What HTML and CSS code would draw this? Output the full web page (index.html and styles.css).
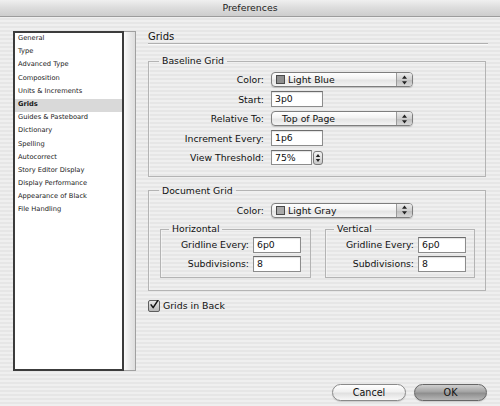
FILE: index.html
```html
<!DOCTYPE html>
<html>
<head>
<meta charset="utf-8">
<link rel="stylesheet" href="styles.css">
</head>
<body>
<div class="window">
  <div class="titlebar">Preferences</div>
  <div class="content">
    <div class="sidebar">
      <ul class="list">
        <li>General</li>
        <li>Type</li>
        <li>Advanced Type</li>
        <li>Composition</li>
        <li>Units &amp; Increments</li>
        <li class="selected">Grids</li>
        <li>Guides &amp; Pasteboard</li>
        <li>Dictionary</li>
        <li>Spelling</li>
        <li>Autocorrect</li>
        <li>Story Editor Display</li>
        <li>Display Performance</li>
        <li>Appearance of Black</li>
        <li>File Handling</li>
      </ul>
      <div class="gutter"></div>
    </div>
    <div class="main">
      <div class="section-title">Grids</div>
      <fieldset class="group baseline">
        <legend>Baseline Grid</legend>
        <div class="form">
          <span class="lbl">Color:</span>
          <div class="popup"><span class="swatch blue"></span><span class="ptext">Light Blue</span><span class="arrows"><svg width="7" height="10" viewBox="0 0 7 10"><path d="M3.5 0.5 L6 3.8 L1 3.8 Z M3.5 9.5 L6 6.2 L1 6.2 Z" fill="#222"/></svg></span></div>
          <span class="lbl">Start:</span>
          <div class="field">3p0</div>
          <span class="lbl">Relative To:</span>
          <div class="popup"><span class="ptext plain">Top of Page</span><span class="arrows"><svg width="7" height="10" viewBox="0 0 7 10"><path d="M3.5 0.5 L6 3.8 L1 3.8 Z M3.5 9.5 L6 6.2 L1 6.2 Z" fill="#222"/></svg></span></div>
          <span class="lbl">Increment Every:</span>
          <div class="field">1p6</div>
          <span class="lbl">View Threshold:</span>
          <div class="combo"><div class="field short">75%</div><div class="stepper"><svg width="6" height="10" viewBox="0 0 6 10"><path d="M3 1 L5.2 4 L0.8 4 Z M3 9 L5.2 6 L0.8 6 Z" fill="#222"/></svg></div></div>
        </div>
      </fieldset>
      <fieldset class="group document">
        <legend>Document Grid</legend>
        <div class="form">
          <span class="lbl">Color:</span>
          <div class="popup"><span class="swatch gray"></span><span class="ptext">Light Gray</span><span class="arrows"><svg width="7" height="10" viewBox="0 0 7 10"><path d="M3.5 0.5 L6 3.8 L1 3.8 Z M3.5 9.5 L6 6.2 L1 6.2 Z" fill="#222"/></svg></span></div>
        </div>
        <div class="subs">
          <fieldset class="group sub horiz">
            <legend>Horizontal</legend>
            <div class="subform">
              <span class="lbl">Gridline Every:</span>
              <div class="field">6p0</div>
              <span class="lbl">Subdivisions:</span>
              <div class="field">8</div>
            </div>
          </fieldset>
          <fieldset class="group sub vert">
            <legend>Vertical</legend>
            <div class="subform">
              <span class="lbl">Gridline Every:</span>
              <div class="field">6p0</div>
              <span class="lbl">Subdivisions:</span>
              <div class="field">8</div>
            </div>
          </fieldset>
        </div>
      </fieldset>
      <div class="check-row">
        <span class="checkbox"><svg width="12" height="12" viewBox="0 0 12 12"><path d="M2.5 5.8 L5 9.2 L10.5 0.8" fill="none" stroke="#111" stroke-width="1.8" stroke-linecap="round" stroke-linejoin="round"/></svg></span>
        <span class="check-label">Grids in Back</span>
      </div>
    </div>
  </div>
  <div class="footer">
    <button class="btn">Cancel</button>
    <button class="btn default">OK</button>
  </div>
</div>
</body>
</html>
```
FILE: styles.css
```css
html, body {
  margin: 0;
  padding: 0;
}
body {
  width: 500px;
  height: 406px;
  overflow: hidden;
  font-family: "DejaVu Sans", sans-serif;
  color: #111;
  background: repeating-linear-gradient(to bottom, #efefef 0, #efefef 2px, #e6e6e6 2px, #e6e6e6 4px);
}
.window {
  display: flex;
  flex-direction: column;
  width: 500px;
  height: 406px;
}
.titlebar {
  height: 17px;
  box-sizing: border-box;
  border-bottom: 1px solid #9c9c9c;
  background: linear-gradient(to bottom, #f0f0f0, #dcdcdc 50%, #cdcdcd);
  text-align: center;
  font-size: 9.4px;
  line-height: 16px;
  color: #222;
}
.content {
  display: flex;
  padding: 14px 0 0 13px;
  height: 354px;
  box-sizing: border-box;
}
.sidebar {
  display: flex;
  width: 123px;
  height: 340px;
}
.list {
  list-style: none;
  margin: 0;
  padding: 0;
  flex: 1;
  background: #fff;
  border: 2px solid #3c3c3c;
  border-right-width: 2px;
}
.list li {
  height: 13.2px;
  line-height: 11px;
  padding: 0 0 0 3px;
  font-size: 6.7px;
  color: #1a1a1a;
  white-space: nowrap;
}
.list li.selected {
  background: #d9d9d9;
  font-weight: bold;
}
.gutter {
  width: 11px;
  border: 1px solid #a0a0a0;
  border-left: none;
  background: linear-gradient(to right, #fafafa, #e8e8e8 60%, #dedede);
}
.main {
  width: 340px;
  margin-left: 12px;
  padding-top: 0;
}
.section-title {
  height: 12px;
  line-height: 12px;
  font-size: 10px;
  border-bottom: 1px solid #b0b0b0;
  box-shadow: 0 1px 0 #fafafa;
}
.group {
  margin: 0;
  padding: 0;
  min-width: 0;
  border: 1px solid #b4b4b4;
  box-shadow: inset 1px 1px 0 rgba(255,255,255,0.4);
}
.group legend {
  padding: 0 3px;
  margin-left: 10px;
  font-size: 9.3px;
  line-height: 12px;
}
.baseline {
  width: 338px;
  box-sizing: border-box;
  margin-top: 11px;
  padding: 3px 0 8px 0;
}
.document {
  width: 338px;
  box-sizing: border-box;
  margin-top: 8px;
  padding: 4px 0 11.5px 0;
}
.form {
  display: grid;
  grid-template-columns: 115px auto;
  column-gap: 7px;
  grid-auto-rows: 19.5px;
  align-items: center;
  justify-items: start;
}
.lbl {
  justify-self: end;
  font-size: 9.3px;
  white-space: nowrap;
}
.field {
  box-sizing: border-box;
  width: 52px;
  height: 16px;
  background: #fff;
  border: 1px solid #8c8c8c;
  border-top-color: #6c6c6c;
  box-shadow: inset 0 1px 1px rgba(0,0,0,0.12);
  font-size: 9.3px;
  line-height: 14px;
  padding-left: 3px;
}
.combo {
  display: flex;
  align-items: center;
  gap: 1px;
}
.field.short {
  width: 41px;
  height: 15px;
  line-height: 13px;
}
.stepper {
  box-sizing: border-box;
  width: 10px;
  height: 14px;
  border: 1px solid #7a7a7a;
  border-radius: 3px;
  background: linear-gradient(to bottom, #f4f4f4, #c8c8c8);
  display: flex;
  align-items: center;
  justify-content: center;
}
.popup {
  box-sizing: border-box;
  width: 142px;
  height: 15px;
  display: flex;
  align-items: center;
  border: 1px solid #7e7e7e;
  border-radius: 4px;
  background: linear-gradient(to bottom, #ffffff, #f2f2f2 45%, #e4e4e4 55%, #f4f4f4);
  box-shadow: 0 1px 1px rgba(0,0,0,0.18);
  overflow: hidden;
}
.swatch {
  box-sizing: border-box;
  width: 9px;
  height: 9px;
  margin-left: 4px;
  border: 1px solid #4a4a4a;
}
.swatch.blue { background: #8e8e8e; }
.swatch.gray { background: #a9a9a9; }
.ptext {
  flex: 1;
  font-size: 9.3px;
  padding-left: 3px;
  white-space: nowrap;
}
.ptext.plain {
  padding-left: 10px;
}
.arrows {
  width: 15px;
  height: 100%;
  border-left: 1px solid #9a9a9a;
  background: linear-gradient(to bottom, #ececec, #cfcfcf 50%, #bcbcbc 50%, #d8d8d8);
  display: flex;
  align-items: center;
  justify-content: center;
}
.subs {
  display: flex;
  gap: 14px;
  padding-left: 11px;
  margin-top: 3px;
}
.sub {
  box-sizing: border-box;
  padding: 0 0 4px 0;
}
.sub legend {
  margin-left: 8px;
}
.horiz { width: 151px; }
.vert { width: 150px; }
.subform {
  display: grid;
  grid-template-columns: 88px 48px;
  column-gap: 4px;
  grid-auto-rows: 19px;
  align-items: center;
}
.subform .field {
  width: 48px;
}
.check-row {
  display: flex;
  align-items: center;
  gap: 3px;
  margin-top: 9px;
  height: 12px;
}
.checkbox {
  box-sizing: border-box;
  width: 12px;
  height: 12px;
  border: 1px solid #5e5e5e;
  border-radius: 2px;
  background: linear-gradient(to bottom, #e8e8e8, #b8b8b8);
  display: flex;
}
.checkbox svg {
  margin: -2px 0 0 0;
}
.check-label {
  font-size: 9.4px;
}
.footer {
  display: flex;
  justify-content: flex-end;
  gap: 8px;
  padding-right: 13px;
  margin-top: 13px;
}
.btn {
  box-sizing: border-box;
  height: 17px;
  width: 74px;
  padding: 0;
  border-radius: 9px;
  border: 1px solid #8a8a8a;
  font-family: "DejaVu Sans", sans-serif;
  font-size: 9.6px;
  color: #111;
  background: linear-gradient(to bottom, #ffffff, #f0f0f0 45%, #e0e0e0 55%, #f8f8f8);
  box-shadow: 0 1px 1px rgba(0,0,0,0.15);
}
.btn.default {
  width: 73px;
  border-color: #666;
  background: linear-gradient(to bottom, #cfcfcf, #a4a4a4 45%, #8e8e8e 55%, #b6b6b6);
}
```
